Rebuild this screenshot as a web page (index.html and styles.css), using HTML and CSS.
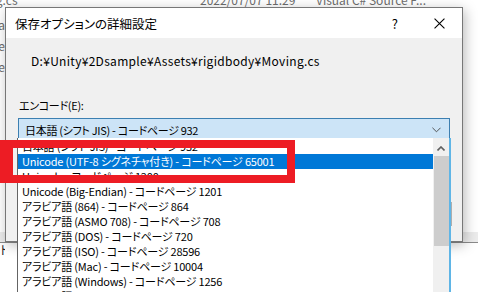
FILE: index.html
```html
<!DOCTYPE html>
<html lang="ja">
<head>
  <meta charset="UTF-8" />
  <title>保存オプションの詳細設定</title>
  <link rel="stylesheet" href="styles.css">
</head>
<body>
  <div class="explorer">
    <div class="file-row"><span class="file-name">Moving.cs</span><span class="file-date">2022/07/07 11:29</span><span class="file-type">Visual C# Source F...</span></div>
    <div class="name-edge">
      <span>Jump.cs.meta</span>
      <span>Sample</span>
      <span>Scene</span>
    </div>
    <div class="status-band"></div>
    <div class="status-text">ト</div>
  </div>

  <div class="dialog">
    <div class="titlebar">
      <span class="title">保存オプションの詳細設定</span>
      <span class="title-help">?</span>
      <svg class="title-close" viewBox="0 0 10 10"><path d="M0.5 0.5 L9.5 9.5 M9.5 0.5 L0.5 9.5" /></svg>
    </div>
    <div class="dialog-body">
      <div class="file-path">D:¥Unity¥2Dsample¥Assets¥rigidbody¥Moving.cs</div>
      <div class="field-label">エンコード(E):</div>
      <div class="combo">
        <span>日本語 (シフト JIS) - コードページ 932</span>
        <svg class="chevron" viewBox="0 0 10 6"><path d="M0.5 0.5 L5 5 L9.5 0.5" /></svg>
      </div>
      <div class="ok-edge"></div>
    </div>

    <div class="dropdown">
      <ul class="options">
        <li>日本語 (シフト JIS) - コードページ 932</li>
        <li class="selected">Unicode (UTF-8 シグネチャ付き) - コードページ 65001</li>
        <li>Unicode - コードページ 1200</li>
        <li>Unicode (Big-Endian) - コードページ 1201</li>
        <li>アラビア語 (864) - コードページ 864</li>
        <li>アラビア語 (ASMO 708) - コードページ 708</li>
        <li>アラビア語 (DOS) - コードページ 720</li>
        <li>アラビア語 (ISO) - コードページ 28596</li>
        <li>アラビア語 (Mac) - コードページ 10004</li>
        <li>アラビア語 (Windows) - コードページ 1256</li>
        <li>バルト言語 (ISO) - コードページ 28594</li>
      </ul>
      <div class="scrollbar">
        <svg class="scroll-up" viewBox="0 0 8 5"><path d="M0.5 4.5 L4 1 L7.5 4.5" /></svg>
        <div class="scroll-thumb"></div>
      </div>
    </div>
  </div>

  <div class="mark"></div>
</body>
</html>
```

FILE: styles.css
```css
* {
  margin: 0;
  padding: 0;
  box-sizing: border-box;
}

body {
  width: 478px;
  height: 292px;
  overflow: hidden;
  position: relative;
  background: #fff;
  font-family: "Noto Sans CJK JP", sans-serif;
  font-feature-settings: "palt";
  font-size: 12px;
  color: #000;
}

/* explorer window behind the dialog */
.explorer {
  position: absolute;
  top: -10px;
  left: 0;
  width: 478px;
  height: 302px;
  color: #6d6d6d;
}

.file-row {
  display: flex;
  height: 20px;
  line-height: 20px;
  white-space: nowrap;
  margin-left: -38px;
}

.file-name { width: 238px; }
.file-date { width: 116px; }
.file-type { width: 120px; }

.name-edge {
  width: 5px;
  overflow: hidden;
  display: flex;
  flex-direction: column;
  align-items: flex-end;
  line-height: 21px;
  white-space: nowrap;
  padding-top: 4px;
}

.status-band {
  margin-top: 155px;
  height: 11px;
  background: #ececec;
  border-bottom: 1px solid #8a8a8a;
}

.status-text {
  width: 5px;
  overflow: hidden;
  line-height: 14px;
  color: #222;
}

/* dialog window */
.dialog {
  position: absolute;
  left: 5px;
  top: 7px;
  width: 458px;
  height: 235px;
  border: 1px solid #777;
  background: #f0f0f0;
  box-shadow: 2px 3px 12px rgba(0, 0, 0, 0.28);
}

.titlebar {
  height: 30px;
  background: #fff;
  display: flex;
  align-items: center;
  padding-left: 9px;
}

.title {
  flex: 1;
  font-size: 12.5px;
}

.title-help {
  font-size: 13px;
  margin-right: 36px;
}

.title-close {
  width: 11px;
  height: 11px;
  margin-right: 17px;
  stroke: #000;
  stroke-width: 1;
  fill: none;
}

.dialog-body {
  padding: 13px 12px 0 12px;
  position: relative;
  height: 204px;
}

.file-path {
  padding-left: 13px;
  line-height: 20px;
  letter-spacing: 0.3px;
}

.field-label {
  margin-top: 25px;
  padding-left: 1px;
  line-height: 18px;
  font-size: 11px;
  letter-spacing: -0.3px;
}

.combo {
  margin-top: 4px;
  height: 23px;
  border: 1px solid #3c7fb1;
  background: #cce4f7;
  display: flex;
  align-items: center;
  justify-content: space-between;
  padding: 0 8px 0 6px;
  font-size: 11px;
  letter-spacing: -0.3px;
}

.chevron {
  width: 9px;
  height: 6px;
  stroke: #444;
  stroke-width: 1;
  fill: none;
}

.ok-edge {
  position: absolute;
  right: 10px;
  top: 164px;
  width: 4px;
  height: 24px;
  border: 1px solid #adadad;
  border-left: none;
}

/* open dropdown list */
.dropdown {
  position: absolute;
  left: 11px;
  top: 130px;
  width: 434px;
  height: 170px;
  background: #fff;
  border-left: 1px solid #646464;
  border-right: 2px solid #5fb5e6;
  display: flex;
  z-index: 2;
}

.options {
  list-style: none;
  flex: 1;
  padding-top: 1px;
  font-size: 11px;
  letter-spacing: -0.2px;
}

.options li {
  height: 15px;
  line-height: 15px;
  padding-left: 4px;
  white-space: nowrap;
}

.options li.selected {
  background: #0078d7;
  color: #fff;
}

.scrollbar {
  width: 16px;
  background: #f0f0f0;
  display: flex;
  flex-direction: column;
  align-items: center;
}

.scroll-up {
  width: 8px;
  height: 5px;
  margin: 8px 0 5px;
  stroke: #606060;
  stroke-width: 1.6;
  fill: none;
}

.scroll-thumb {
  width: 15px;
  height: 90px;
  background: #cdcdcd;
}

/* red highlight frame drawn over the screenshot */
.mark {
  position: absolute;
  left: 0;
  top: 140px;
  width: 295px;
  height: 43px;
  border: 8px solid #ed1c24;
  border-left-width: 13px;
  z-index: 3;
}
```
